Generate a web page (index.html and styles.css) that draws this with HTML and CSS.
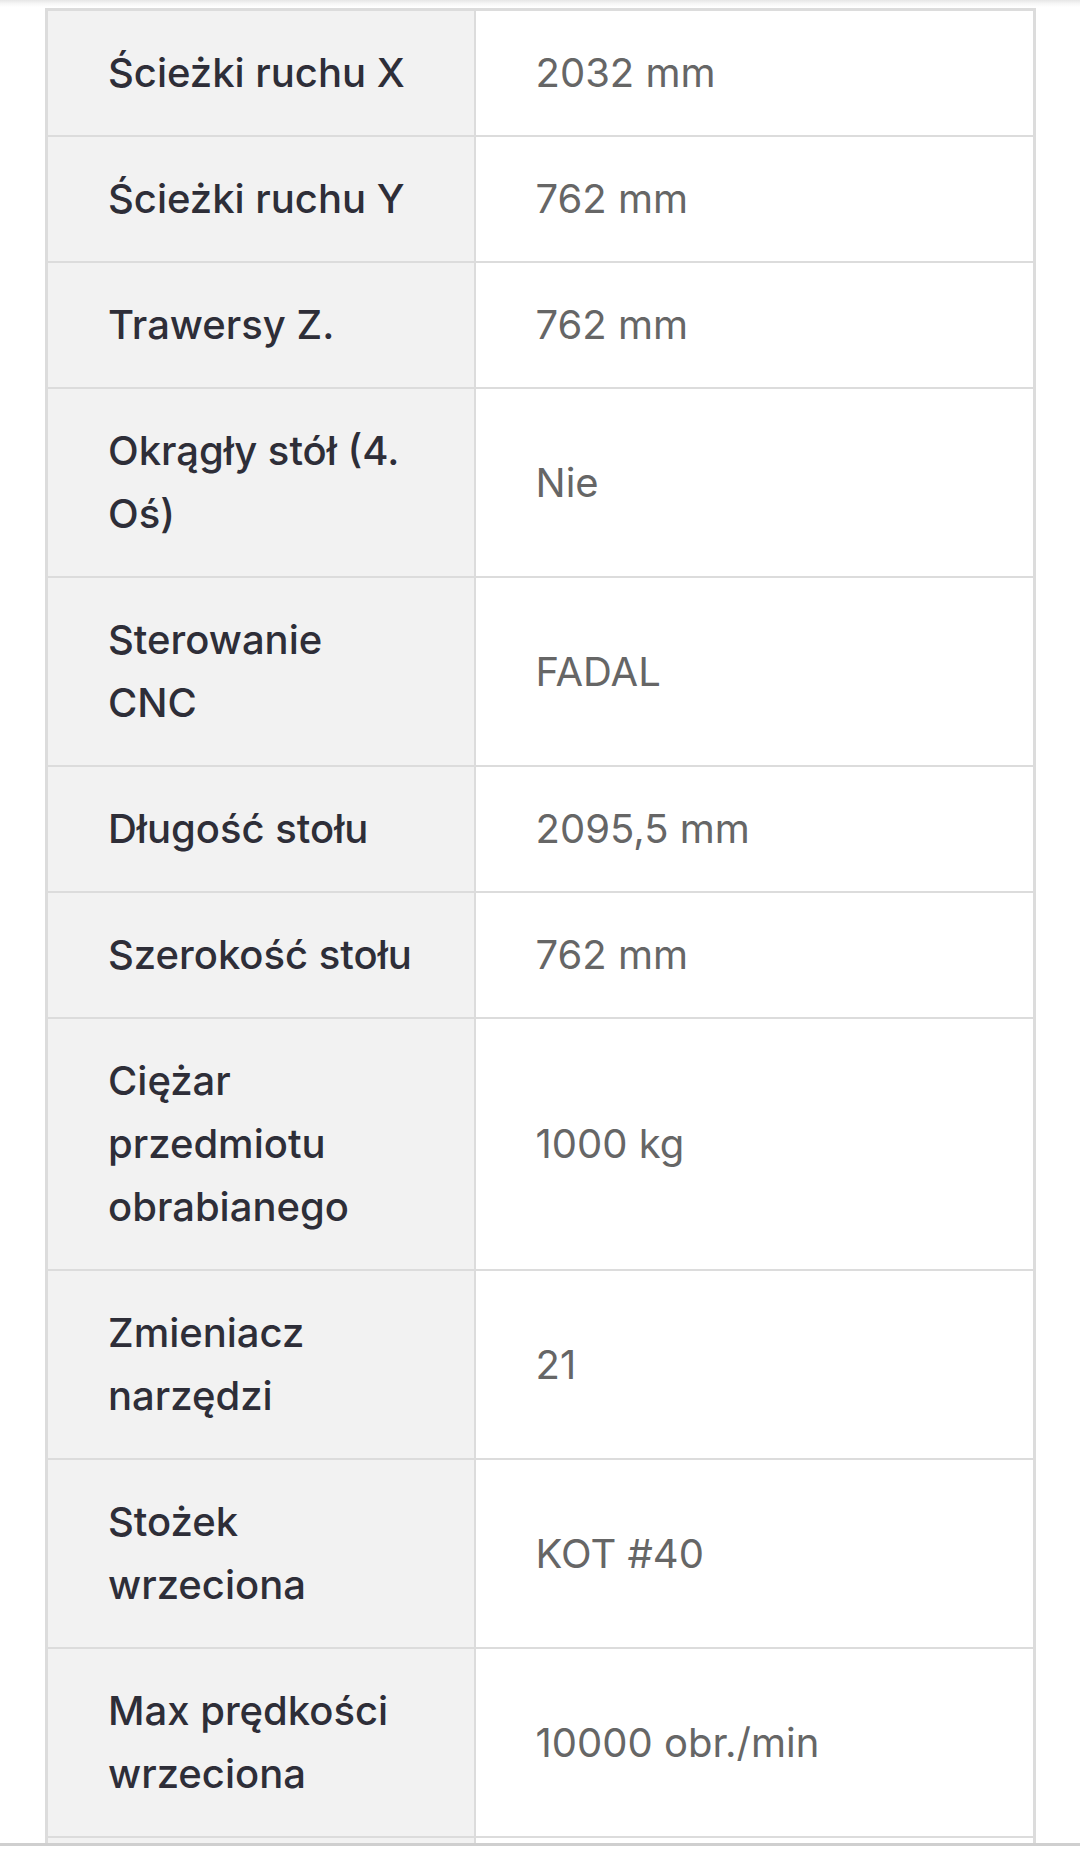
FILE: index.html
```html
<!DOCTYPE html>
<html lang="pl">
<head>
<meta charset="utf-8">
<title>Specyfikacja</title>
<link rel="stylesheet" href="styles.css">
</head>
<body>
<div class="top-shadow"></div>
<main class="page">
  <table class="spec">
    <colgroup><col class="c-label"><col class="c-value"></colgroup>
    <tbody>
      <tr><th>Ścieżki ruchu X</th><td>2032 mm</td></tr>
      <tr><th>Ścieżki ruchu Y</th><td>762 mm</td></tr>
      <tr><th>Trawersy Z.</th><td>762 mm</td></tr>
      <tr><th>Okrągły stół (4. Oś)</th><td>Nie</td></tr>
      <tr><th>Sterowanie CNC</th><td>FADAL</td></tr>
      <tr><th>Długość stołu</th><td>2095,5 mm</td></tr>
      <tr><th>Szerokość stołu</th><td>762 mm</td></tr>
      <tr><th>Ciężar przedmiotu obrabianego</th><td>1000 kg</td></tr>
      <tr><th>Zmieniacz narzędzi</th><td>21</td></tr>
      <tr><th>Stożek wrzeciona</th><td>KOT #40</td></tr>
      <tr><th>Max prędkości wrzeciona</th><td>10000 obr./min</td></tr>
      <tr class="row-partial"><th></th><td></td></tr>
    </tbody>
  </table>
</main>
<div class="bottom-bar"></div>
</body>
</html>
```

FILE: styles.css
```css
html, body {
  margin: 0;
  padding: 0;
  background: #ffffff;
}

body {
  font-family: Inter, "Noto Sans", sans-serif;
  overflow: hidden;
  height: 1853px;
}

.top-shadow {
  height: 7px;
  background: linear-gradient(to bottom, #e6e6e6, #f6f6f6 50%, #ffffff);
}

.page {
  padding: 1px 45px 0 45px;
}

.spec {
  width: 988px;
  border-collapse: collapse;
  table-layout: fixed;
  border: 3px solid #dcdcdc;
}

.c-label { width: 428px; }
.c-value { width: 560px; }

.spec th,
.spec td {
  border: 2px solid #dcdcdc;
  padding: 30px 40px 31px 60px;
  line-height: 63px;
  font-size: 40px;
  text-align: left;
  vertical-align: middle;
}

.spec th {
  background: #f2f2f2;
  color: #2e2e38;
  font-weight: 500;
  padding-right: 56px;
}

.spec td {
  background: #ffffff;
  color: #666666;
  font-weight: 400;
}

.spec .row-partial th,
.spec .row-partial td {
  height: 63px;
}

.bottom-bar {
  position: fixed;
  left: 0;
  right: 0;
  bottom: 0;
  height: 7px;
  background: #ffffff;
  border-top: 3px solid #cfcfcf;
}
```
